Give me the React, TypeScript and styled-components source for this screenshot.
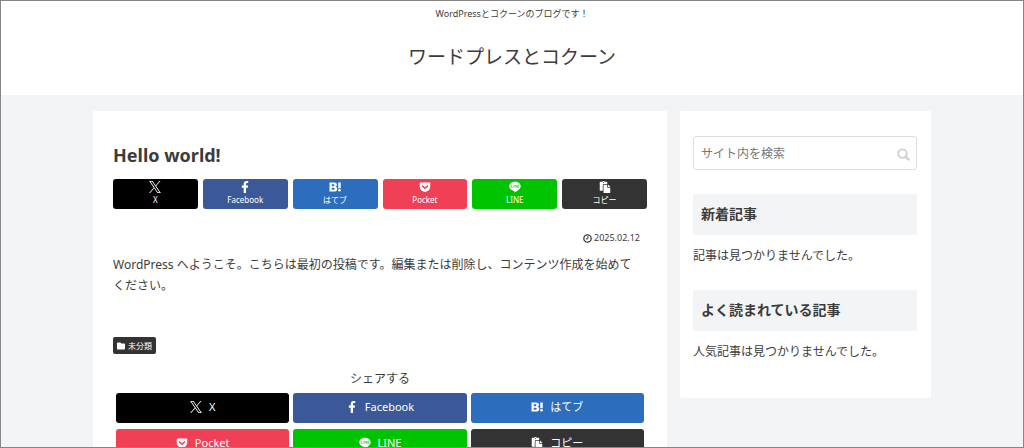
import React from "react";
import styled, { createGlobalStyle, css } from "styled-components";
import { FaFacebookF, FaPaste } from "react-icons/fa";
import { FaGetPocket, FaFolder } from "react-icons/fa6";

const GlobalStyle = createGlobalStyle`
  *, *::before, *::after { box-sizing: border-box; }
  body {
    margin: 0;
    background: #f3f4f6;
    color: #3c3c3c;
    font: 12px/21px "Noto Sans", "Noto Sans CJK JP", sans-serif;
  }
  h1, h2, p { margin: 0; }
  a { color: inherit; text-decoration: none; }
`;

const Frame = styled.div`
  height: 100vh;
  overflow-y: auto;
  scrollbar-width: none;
  border: 1px solid #868686;
`;

const Header = styled.header`
  display: flex;
  flex-direction: column;
  align-items: center;
  gap: 21px;
  padding: 6px 16px 23px;
  background: #fff;
`;

const Tagline = styled.p`
  font-size: 9px;
  line-height: 14px;
`;

const SiteName = styled.a`
  font-size: 19px;
  line-height: 30px;
`;

const Columns = styled.div`
  display: flex;
  align-items: flex-start;
  gap: 13px;
  max-width: 838px;
  margin: 16px auto;
`;

const Article = styled.main`
  flex: 1;
  min-width: 0;
  padding: 30px 20px;
  background: #fff;
  border-radius: 2px;
`;

const Title = styled.h1`
  font-size: 18px;
  line-height: 28px;
`;

const ShareGrid = styled.div<{ $large?: boolean }>`
  display: grid;
  ${({ $large }) =>
    $large
      ? css`
          grid-template-columns: repeat(3, 1fr);
          gap: 6px 4px;
          padding: 0 3px;
          margin-top: 4px;
        `
      : css`
          grid-template-columns: repeat(6, 1fr);
          gap: 5px;
          margin-top: 10px;
        `}
`;

const ShareButton = styled.button<{ $color: string; $large?: boolean }>`
  display: flex;
  align-items: center;
  justify-content: center;
  flex-direction: ${({ $large }) => ($large ? "row" : "column")};
  gap: ${({ $large }) => ($large ? 7 : 1)}px;
  height: 30px;
  padding: 0 0 2px;
  border: 0;
  border-radius: 3px;
  background: ${({ $color }) => $color};
  color: #fff;
  font-family: inherit;
  font-size: ${({ $large }) => ($large ? 11 : 8)}px;
  line-height: ${({ $large }) => ($large ? 16 : 11)}px;
  cursor: pointer;

  svg {
    width: 12px;
    height: 12px;
    flex: none;
  }
`;

const PostDate = styled.p`
  display: flex;
  align-items: center;
  justify-content: flex-end;
  gap: 2px;
  margin-top: 22px;
  padding-right: 7px;
  font-size: 9px;
  line-height: 14px;
`;

const Body = styled.p`
  margin-top: 9px;
  padding-right: 7px;
`;

const Category = styled.a`
  display: flex;
  align-items: center;
  gap: 3px;
  width: fit-content;
  margin-top: 41px;
  padding: 0 4px;
  border-radius: 2px;
  background: #333;
  && { color: #fff; }
  font-size: 8px;
  line-height: 17px;
`;

const ShareHeading = styled.p`
  margin-top: 14px;
  text-align: center;
`;

const Sidebar = styled.aside`
  flex: 0 0 251px;
  padding: 25px 14px 36px 13px;
  background: #fff;
  border-radius: 2px;
`;

const SearchForm = styled.form`
  display: flex;
  align-items: center;
  height: 34px;
  padding: 0 6px 0 7px;
  border: 1px solid #ddd;
  border-radius: 3px;
`;

const SearchInput = styled.input`
  flex: 1;
  min-width: 0;
  padding: 0;
  border: 0;
  outline: 0;
  background: none;
  color: #333;
  font: inherit;

  &::placeholder { color: #777; opacity: 1; }
`;

const SearchButton = styled.button`
  display: flex;
  padding: 2px 0 0;
  border: 0;
  background: none;
  color: #ccc;
  cursor: pointer;
`;

const WidgetTitle = styled.h2`
  margin: 24px 0 10px;
  padding: 9px 8px 11px;
  background: #f3f4f6;
  border-radius: 2px;
  font-size: 14px;
  line-height: 21px;
`;

const XIcon = () => (
  <svg viewBox="0 0 24 24" fill="currentColor" aria-hidden="true">
    <path d="M14.234 10.162 22.977 0h-2.072l-7.591 8.824L7.251 0H.258l9.168 13.343L.258 24H2.330l8.016-9.318L16.749 24h6.993zm-2.837 3.299-.929-1.329L3.076 1.560h3.182l5.965 8.532.929 1.329 7.754 11.090h-3.182z" />
  </svg>
);

const HatenaIcon = () => (
  <svg viewBox="0 0 24 24" fill="currentColor" aria-hidden="true">
    <path
      fillRule="evenodd"
      d="M1 3h8.500c4.300 0 6.300 1.700 6.300 4.600 0 2.100-1.200 3.500-3.200 3.900 2.500.3 3.900 1.900 3.900 4.300 0 3.400-2.400 5.200-6.800 5.200H1V3Zm4.600 3.400v3.900h2.200c2 0 3-.6 3-2s-.9-1.900-2.800-1.900H5.600Zm0 7v4.100h2.700c2 0 3-.7 3-2.100s-1-2-3-2H5.600ZM18.500 3h5v11.500h-5V3Z"
    />
    <circle cx="21" cy="18.500" r="2.600" />
  </svg>
);

const LineIcon = () => (
  <svg viewBox="0 0 24 24" fill="currentColor" aria-hidden="true">
    <path d="M12 1.500C5.600 1.500.5 5.600.5 10.700c0 4.600 4.100 8.400 9.700 9.100 1 .2.900.6.700 2.100-.1.800.2 1.100 1 .7 4.200-2.100 11.600-7 11.600-11.900 0-5.100-5.100-9.200-11.500-9.200Z" />
    <path
      d="M5.200 8v5h2.500M9.700 8v5M12 13V8l3.300 5V8M20 8h-2.500v5H20M17.500 10.500H20"
      fill="none"
      stroke="#00c300"
      strokeWidth="1"
    />
  </svg>
);

const ClockIcon = () => (
  <svg width="9" height="9" viewBox="0 0 18 18" fill="none" stroke="currentColor" strokeWidth="2.600" aria-hidden="true">
    <circle cx="9" cy="9" r="7.400" />
    <path d="M9.800 4.200v5.600H5.600" strokeWidth="2" />
  </svg>
);

const SearchIcon = () => (
  <svg width="13" height="13" viewBox="0 0 26 26" fill="none" stroke="currentColor" strokeWidth="3.500" aria-hidden="true">
    <circle cx="11" cy="11" r="8.500" />
    <path d="m17.500 17.500 6 6" strokeWidth="4" strokeLinecap="round" />
  </svg>
);

const services = [
  { label: "X", color: "#000", icon: <XIcon /> },
  { label: "Facebook", color: "#3b5998", icon: <FaFacebookF /> },
  { label: "はてブ", color: "#2c6ebd", icon: <HatenaIcon /> },
  { label: "Pocket", color: "#ef4056", icon: <FaGetPocket /> },
  { label: "LINE", color: "#00c300", icon: <LineIcon /> },
  { label: "コピー", color: "#333", icon: <FaPaste /> },
];

const ShareButtons = ({ large }: { large?: boolean }) => (
  <ShareGrid $large={large}>
    {services.map(({ label, color, icon }) => (
      <ShareButton key={label} type="button" $color={color} $large={large}>
        {icon}
        <span>{label}</span>
      </ShareButton>
    ))}
  </ShareGrid>
);

export default function App() {
  return (
    <Frame lang="ja">
      <GlobalStyle />
      <Header>
        <Tagline>WordPressとコクーンのブログです！</Tagline>
        <SiteName href="#">ワードプレスとコクーン</SiteName>
      </Header>
      <Columns>
        <Article>
          <Title>Hello world!</Title>
          <ShareButtons />
          <PostDate>
            <ClockIcon />
            <time dateTime="2025-02-12">2025.02.12</time>
          </PostDate>
          <Body>
            WordPress へようこそ。こちらは最初の投稿です。編集または削除し、コンテンツ作成を始めてください。
          </Body>
          <Category href="#">
            <FaFolder aria-hidden="true" />
            未分類
          </Category>
          <ShareHeading>シェアする</ShareHeading>
          <ShareButtons large />
        </Article>
        <Sidebar>
          <SearchForm role="search">
            <SearchInput type="text" placeholder="サイト内を検索" aria-label="サイト内を検索" />
            <SearchButton type="submit" aria-label="検索">
              <SearchIcon />
            </SearchButton>
          </SearchForm>
          <WidgetTitle>新着記事</WidgetTitle>
          <p>記事は見つかりませんでした。</p>
          <WidgetTitle>よく読まれている記事</WidgetTitle>
          <p>人気記事は見つかりませんでした。</p>
        </Sidebar>
      </Columns>
    </Frame>
  );
}
